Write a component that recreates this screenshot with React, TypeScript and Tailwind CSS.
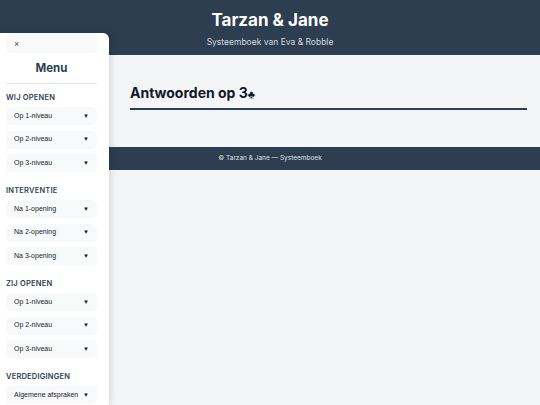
import React from "react";

const sections = [
  { title: "WIJ OPENEN", items: ["Op 1-niveau", "Op 2-niveau", "Op 3-niveau"] },
  { title: "INTERVENTIE", items: ["Na 1-opening", "Na 2-opening", "Na 3-opening"] },
  { title: "ZIJ OPENEN", items: ["Op 1-niveau", "Op 2-niveau", "Op 3-niveau"] },
  { title: "VERDEDIGINGEN", items: ["Algemene afspraken"] },
];

export default function App() {
  return (
    <div
      className="relative w-[540px] h-[405px] overflow-hidden bg-[#f4f5f7]"
      style={{ fontFamily: "Inter, 'Liberation Sans', Arial, sans-serif" }}
    >
      <header className="h-[55px] bg-[#2c3e50] flex flex-col items-center text-white">
        <h1 className="mt-[9px] text-[17px] leading-[22px] font-bold">Tarzan &amp; Jane</h1>
        <p className="mt-[5px] text-[8.5px] leading-[12px] text-[#d5dbe1]">Systeemboek van Eva &amp; Robble</p>
      </header>
      <main className="h-[92px] pl-[130px] pr-[13px] pt-[28px] box-border">
        <div className="border-b-2 border-[#2c3e50] pb-[4px]">
          <h2 className="text-[14px] leading-[19px] font-bold text-[#111827]">
            Antwoorden op 3<span className="text-[11px]">♣</span>
          </h2>
        </div>
      </main>
      <footer className="h-[23px] bg-[#2c3e50] flex items-center justify-center text-[6.5px] text-[#dfe4ea]">
        © Tarzan &amp; Jane — Systeemboek
      </footer>

      <aside className="absolute left-0 top-[33px] w-[109px] h-[372px] bg-white rounded-tr-[6px] shadow-[2px_0_6px_rgba(0,0,0,0.12)] pl-[6px] pr-[12px] overflow-hidden">
        <div className="h-[20px] bg-[#f8f9fa] rounded-[4px] flex items-center pl-[8px] text-[8px] text-[#333]">×</div>
        <div className="mt-[8px] text-center text-[11.5px] leading-[14px] font-bold text-[#2c3e50]">Menu</div>
        <div className="mt-[8px] border-t border-[#e5e7eb]" />
        <div className="flex flex-col">
          {sections.map((s, i) => (
            <div key={i} className={i === 0 ? "mt-[8px]" : "mt-[13px]"}>
              <div className="text-[7.5px] leading-[12px] font-semibold tracking-[0.2px] text-[#2c3e50]">{s.title}</div>
              <div className="mt-[3px] flex flex-col gap-[5.5px]">
                {s.items.map((it, j) => (
                  <div
                    key={j}
                    className="h-[18px] bg-[#f8f9fa] rounded-[5px] flex items-center justify-between pl-[8px] pr-[8px] text-[7px] text-[#222]"
                    style={{ fontFamily: "'Liberation Sans', Arial, sans-serif" }}
                  >
                    <span>{it}</span>
                    <span className="text-[6px]">▼</span>
                  </div>
                ))}
              </div>
            </div>
          ))}
        </div>
      </aside>
    </div>
  );
}
